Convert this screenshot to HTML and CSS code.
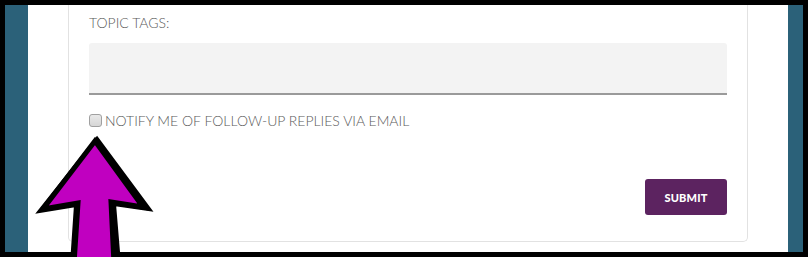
FILE: index.html
```html
<!DOCTYPE html>
<html>
<head>
<meta charset="utf-8">
<link rel="stylesheet" href="styles.css">
</head>
<body>
<div class="frame">
  <div class="side side-left"></div>
  <main class="main">
    <form class="card">
      <label class="field-label" for="tags">TOPIC TAGS:</label>
      <input class="tags-input" id="tags" type="text">
      <label class="notify">
        <input class="notify-box" type="checkbox">
        <span>NOTIFY ME OF FOLLOW-UP REPLIES VIA EMAIL</span>
      </label>
      <div class="actions">
        <button class="submit" type="button">SUBMIT</button>
      </div>
    </form>
  </main>
  <div class="side side-right"></div>
  <svg class="arrow" width="808" height="257" viewBox="0 0 808 257" aria-hidden="true">
    <polygon points="97,139 149,209 114,204 119,264 72,264 76,205 40,211" fill="#000" stroke="#000" stroke-width="4" stroke-linejoin="miter"/>
    <polygon points="95,141 143,207 111,202 114,264 74,264 78,203 43,209" fill="#c000c0" stroke="#000" stroke-width="5" stroke-linejoin="miter"/>
  </svg>
</div>
</body>
</html>
```

FILE: styles.css
```css
* { box-sizing: border-box; }
html, body { margin: 0; padding: 0; }
body {
  background: #000;
  font-family: "Lato Light", Lato, "Liberation Sans", sans-serif;
  width: 808px;
  height: 257px;
  overflow: hidden;
}
.frame {
  position: relative;
  height: 257px;
  padding: 5px;
  display: flex;
}
.side { background: #2b6179; }
.side-left { width: 23px; }
.side-right { width: 15px; }
.main {
  flex: 1;
  background: #fff;
  padding: 0 40px 10px;
  display: flex;
  flex-direction: column;
}
.card {
  flex: 1;
  border: 1px solid #e2e2e2;
  border-top: none;
  border-radius: 0 0 5px 5px;
  padding: 9px 20px 0;
  display: flex;
  flex-direction: column;
  margin: 0;
}
.field-label {
  display: block;
  font-size: 14px;
  font-weight: 300;
  line-height: 18px;
  color: #5a5a5a;
  margin-bottom: 11px;
}
.tags-input {
  display: block;
  width: 100%;
  height: 52px;
  border: none;
  border-bottom: 2px solid #9a9a9a;
  border-radius: 3px 3px 0 0;
  background: #f3f3f3;
  margin: 0;
}
.notify {
  display: flex;
  align-items: center;
  margin-top: 18px;
  height: 14px;
  font-size: 14px;
  font-weight: 300;
  color: #5a5a5a;
}
.notify-box {
  appearance: none;
  -webkit-appearance: none;
  width: 13px;
  height: 13px;
  margin: 0 3px 0 0;
  border: 1px solid #a0a0a0;
  border-radius: 3px;
  background: linear-gradient(#e9e9e9, #d6d6d6);
}
.actions {
  display: flex;
  justify-content: flex-end;
  margin-top: 52px;
}
.submit {
  width: 82px;
  height: 36px;
  background: #5c2360;
  color: #fff;
  border: none;
  border-radius: 3px;
  font-family: Lato, "Liberation Sans", sans-serif;
  font-weight: 900;
  font-size: 11px;
  letter-spacing: 0.2px;
}
.arrow {
  position: absolute;
  left: 0;
  top: 0;
  pointer-events: none;
}
```
